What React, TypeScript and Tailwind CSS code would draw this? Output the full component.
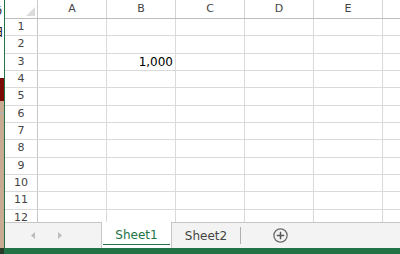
const columns = ["A", "B", "C", "D", "E", ""];
const rows = Array.from({ length: 12 }, (_, i) => i + 1);

const font = { fontFamily: '"DejaVu Sans", "Noto Sans CJK JP", sans-serif' };

export default function App() {
  return (
    <div className="flex h-[254px] w-[400px] overflow-hidden bg-white" style={font}>
      {/* window behind, peeking at the left edge */}
      <div className="flex w-[4px] shrink-0 flex-col">
        <div className="flex h-[78px] flex-col bg-white text-[13px] leading-none text-[#222]">
          <div className="mt-[4px] flex w-[4px] justify-end overflow-hidden">
            <span className="shrink-0">う</span>
          </div>
          <div className="mt-[8px] flex w-[4px] justify-end overflow-hidden">
            <span className="shrink-0">ヨ</span>
          </div>
        </div>
        <div className="h-[23px] bg-[#7a0a06]" />
        <div className="h-[12px] bg-[#c9ab94]" />
        <div className="h-px bg-[#9fb0c8]" />
        <div className="flex-1 bg-[#c9ab94]" />
        <div className="h-[6px] bg-[#2a3a2a]" />
      </div>

      <div className="flex min-w-0 flex-1 flex-col border-l border-[#217346]">
        {/* grid */}
        <div className="h-[222px] overflow-hidden">
          <div className="flex h-[19px] border-b border-[#bdbdbd] text-[11px] text-[#444]">
            <div className="relative w-[33px] shrink-0 border-r border-[#c8c8c8]">
              <svg className="absolute bottom-[2px] right-[2px]" width="9" height="9" viewBox="0 0 9 9">
                <path d="M9 0 L9 9 L0 9 Z" fill="#dcdcdc" />
              </svg>
            </div>
            {columns.map((c, i) => (
              <div
                key={i}
                className="flex w-[69px] shrink-0 items-center justify-center border-r border-[#d4d4d4]"
              >
                {c}
              </div>
            ))}
          </div>
          {rows.map((r) => (
            <div key={r} className="flex h-[17.33px] border-b border-[#dadada]">
              <div className="flex w-[33px] shrink-0 items-center justify-center border-r border-[#c8c8c8] text-[11px] text-[#444]">
                {r}
              </div>
              {columns.map((c, i) => (
                <div
                  key={i}
                  className="flex w-[69px] shrink-0 items-center justify-end border-r border-[#dadada] pr-[2px] text-[12px] text-black"
                >
                  {r === 3 && c === "B" ? "1,000" : ""}
                </div>
              ))}
            </div>
          ))}
        </div>

        {/* sheet tabs */}
        <div className="flex h-[26px] bg-[#f3f3f3] text-[12px]">
          <div className="flex w-[97px] shrink-0 items-center gap-[23px] border-r border-t border-[#c6c6c6] pl-[26px]">
            <svg width="4" height="7" viewBox="0 0 4 7">
              <path d="M4 0 L0 3.5 L4 7 Z" fill="#bcbcbc" />
            </svg>
            <svg width="4" height="7" viewBox="0 0 4 7">
              <path d="M0 0 L4 3.5 L0 7 Z" fill="#bcbcbc" />
            </svg>
          </div>
          <div className="flex w-[70px] shrink-0 flex-col border-r border-[#c6c6c6] bg-white">
            <div className="flex flex-1 items-center justify-center pt-[4px] text-[#217346]">Sheet1</div>
            <div className="mx-px mb-[3px] h-[2px] bg-[#217346]" />
          </div>
          <div className="flex flex-1 items-center border-t border-[#c6c6c6]">
            <div className="flex w-[68px] items-center justify-center text-[#444]">Sheet2</div>
            <div className="h-[17px] w-px bg-[#b0b0b0]" />
            <svg className="ml-[32px]" width="15" height="15" viewBox="0 0 15 15">
              <circle cx="7.5" cy="7.5" r="6.6" fill="none" stroke="#6a6a6a" strokeWidth="1.3" />
              <path d="M7.5 3.8 V11.2 M3.8 7.5 H11.2" stroke="#555" strokeWidth="1.5" />
            </svg>
          </div>
        </div>
        <div className="h-[6px] bg-[#217346]" />
      </div>
    </div>
  );
}
